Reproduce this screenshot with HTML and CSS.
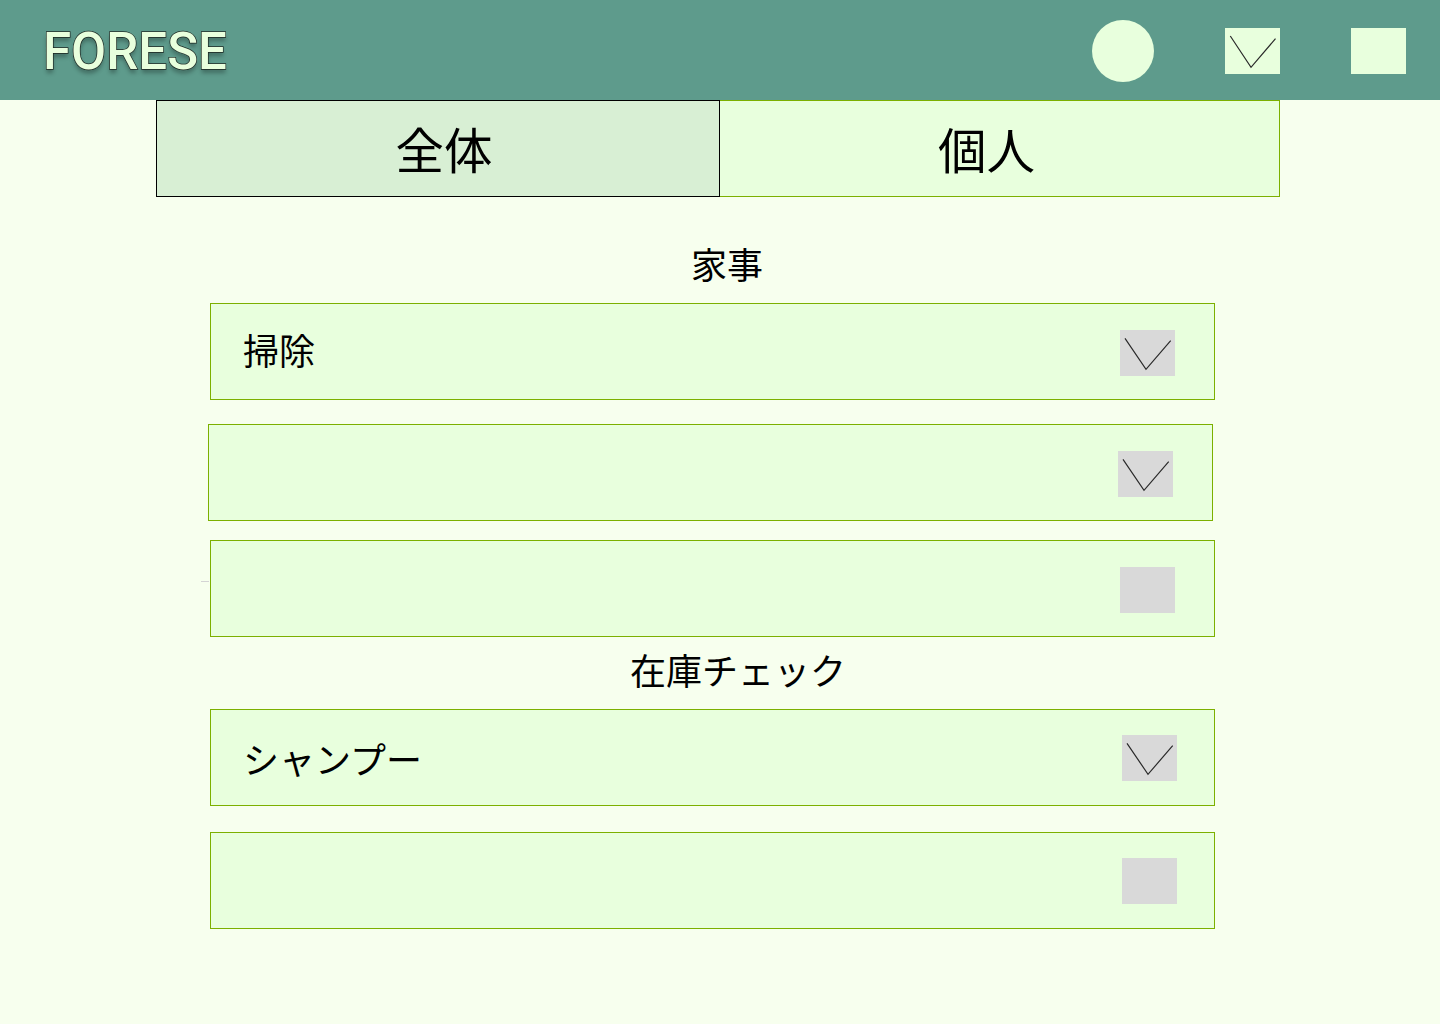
FILE: index.html
```html
<!DOCTYPE html>
<html lang="ja">
<head>
<meta charset="utf-8">
<title>FORESE</title>
<link rel="stylesheet" href="styles.css">
</head>
<body>
<header class="header">
  <div class="logo">FORESE</div>
  <div class="header-icons">
    <div class="hdr-circle"></div>
    <div class="hdr-box">
      <svg width="55" height="46" viewBox="0 0 55 46"><polyline points="5.3,8 26,39.3 50.5,10.7" fill="none" stroke="#2a2a2a" stroke-width="1.2"/></svg>
    </div>
    <div class="hdr-box"></div>
  </div>
</header>
<nav class="tabs">
  <div class="tab tab-active">全体</div>
  <div class="tab tab-other">個人</div>
</nav>
<main class="content">
  <h2 class="section-title title-chores">家事</h2>
  <div class="row row-1">
    <span class="row-label label-kanji">掃除</span>
    <div class="row-icon"><svg width="55" height="46" viewBox="0 0 55 46"><polyline points="5,8.3 26,39.3 50.7,10.7" fill="none" stroke="#2a2a2a" stroke-width="1.2"/></svg></div>
  </div>
  <div class="row row-2">
    <span class="row-label"></span>
    <div class="row-icon"><svg width="55" height="46" viewBox="0 0 55 46"><polyline points="5,8.3 26,39.3 50.7,10.7" fill="none" stroke="#2a2a2a" stroke-width="1.2"/></svg></div>
  </div>
  <div class="row row-3">
    <span class="row-label"></span>
    <div class="row-icon"></div>
  </div>
  <h2 class="section-title title-stock">在庫チェック</h2>
  <div class="row row-4">
    <span class="row-label">シャンプー</span>
    <div class="row-icon icon-shift"><svg width="55" height="46" viewBox="0 0 55 46"><polyline points="5,8.3 26,39.3 50.7,10.7" fill="none" stroke="#2a2a2a" stroke-width="1.2"/></svg></div>
  </div>
  <div class="row row-5">
    <span class="row-label"></span>
    <div class="row-icon icon-shift"></div>
  </div>
</main>
</body>
</html>
```

FILE: styles.css
```css
* { box-sizing: border-box; }
html, body {
  margin: 0;
  padding: 0;
}
body {
  width: 1440px;
  min-height: 1024px;
  background: #f7ffee;
  font-family: "Noto Sans CJK JP", "Noto Sans", sans-serif;
  color: #000;
}
.header {
  height: 100px;
  background: #5e9b8c;
  display: flex;
  align-items: center;
  justify-content: space-between;
  padding: 0 34px 0 43px;
}
.logo {
  font-family: Roboto, "Liberation Sans", sans-serif;
  font-size: 51px;
  font-weight: 500;
  color: #e8ffdd;
  -webkit-text-stroke: 1.4px #1e2a24;
  paint-order: stroke fill;
  text-shadow: 0 4px 4px rgba(0, 0, 0, 0.3);
  line-height: 1;
  margin-top: 3px;
}
.header-icons {
  display: flex;
  align-items: center;
  gap: 71px;
}
.hdr-circle {
  width: 62px;
  height: 62px;
  border-radius: 50%;
  background: #e8ffdd;
  margin-top: 2px;
}
.hdr-box {
  width: 55px;
  height: 46px;
  background: #e8ffdd;
  display: flex;
  margin-top: 2px;
}
.tabs {
  display: flex;
  margin-left: 156px;
  width: 1124px;
}
.tab {
  height: 97px;
  display: flex;
  align-items: center;
  justify-content: center;
  font-size: 48.5px;
  line-height: 1;
}
.tab-active {
  width: 564px;
  background: #d8efd4;
  border: 1px solid #000;
  padding-left: 12px;
}
.tab-other {
  width: 560px;
  background: #e8ffdd;
  border: 1px solid #7cb000;
  border-left: none;
  padding-right: 26px;
}
.content {
  display: flex;
  flex-direction: column;
  padding-left: 210px;
  width: 1215px;
}
.section-title {
  margin: 0;
  font-size: 36px;
  font-weight: 400;
  line-height: 36px;
  text-align: center;
  width: 1005px;
}
.title-chores {
  margin-top: 48px;
  padding-left: 29px;
}
.title-stock {
  margin-top: 14px;
  padding-left: 51px;
}
.row {
  width: 1005px;
  height: 97px;
  background: #e8ffdd;
  border: 1px solid #7cb000;
  display: flex;
  align-items: center;
  justify-content: space-between;
  padding: 0 39px 0 32px;
}
.row-label {
  font-size: 36px;
  line-height: 1;
}
.label-kanji {
  margin-bottom: 5px;
}
.row-icon {
  width: 55px;
  height: 46px;
  background: #d9d9d9;
  display: flex;
  margin-top: 3px;
}
.icon-shift {
  margin-right: -2px;
  margin-top: 0;
}
.row-1 { margin-top: 22px; }
.row-2 { margin-top: 24px; margin-left: -2px; }
.row-3 { margin-top: 19px; position: relative; }
.row-3::before {
  content: "";
  position: absolute;
  left: -10px;
  top: 40px;
  width: 8px;
  height: 1px;
  background: #d4d4d4;
}
.row-4 { margin-top: 22px; }
.row-5 { margin-top: 26px; }
```
